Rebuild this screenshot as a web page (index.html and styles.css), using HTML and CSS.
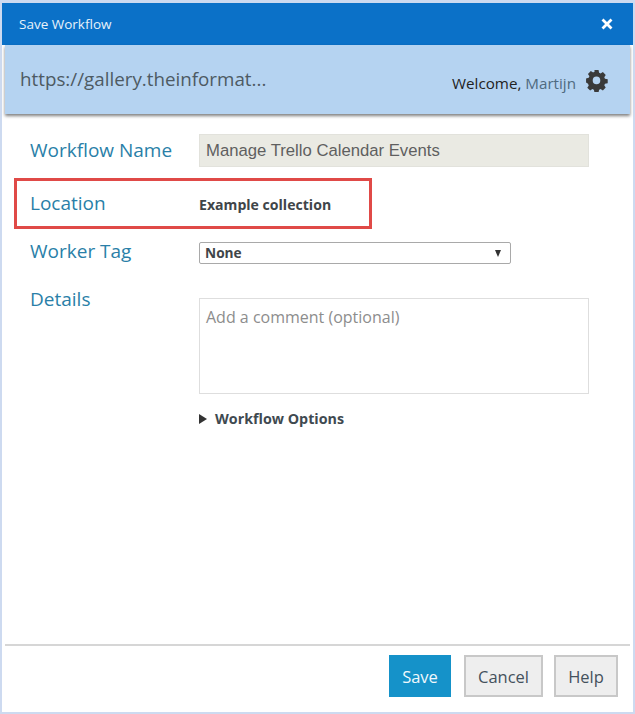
FILE: index.html
```html
<!DOCTYPE html>
<html lang="en">
<head>
<meta charset="utf-8">
<title>Save Workflow</title>
<link rel="stylesheet" href="styles.css">
</head>
<body>
<div class="window">
  <header class="titlebar">
    <span class="title">Save Workflow</span>
    <button class="close" type="button" aria-label="Close">
      <svg viewBox="0 0 12 12" width="12" height="12"><path d="M1.5 1.5l9 9M10.5 1.5l-9 9" stroke="#fff" stroke-width="2.8" fill="none"/></svg>
    </button>
  </header>
  <section class="server">
    <span class="url">https://gallery.theinformat...</span>
    <div class="user">
      <span class="welcome">Welcome, <span class="name">Martijn</span></span>
      <svg class="gear" viewBox="0 0 24 24" width="23" height="23"><path fill="#3a3a3a" fill-rule="evenodd" d="M9.6 1h4.8l.6 3.1c.6.2 1.2.5 1.7.8l2.7-1.7 3.3 3.4-1.7 2.6c.3.6.6 1.2.8 1.8l3.2.6v4.7l-3.2.6c-.2.6-.4 1.2-.8 1.8l1.7 2.6-3.3 3.4-2.7-1.8c-.5.4-1.1.6-1.7.8l-.6 3.2H9.6L9 23.8c-.6-.2-1.2-.4-1.7-.8l-2.7 1.8-3.3-3.4 1.7-2.6c-.4-.6-.6-1.2-.8-1.8L-.1 15.4v-4.7L3 10c.2-.6.5-1.2.8-1.8L2.1 5.6l3.3-3.4 2.7 1.7c.5-.3 1.1-.6 1.7-.8zM12 8.6a4.4 4.4 0 1 0 0 8.8 4.4 4.4 0 0 0 0-8.8z" transform="translate(1.2 .2) scale(.9)"/></svg>
    </div>
  </section>
  <main class="form">
    <div class="row row-name">
      <label class="label">Workflow Name</label>
      <div class="readonly">Manage Trello Calendar Events</div>
    </div>
    <div class="row row-location">
      <label class="label">Location</label>
      <strong class="location">Example collection</strong>
    </div>
    <div class="row row-tag">
      <label class="label">Worker Tag</label>
      <div class="select"><span>None</span><span class="caret"></span></div>
    </div>
    <div class="row row-details">
      <label class="label">Details</label>
      <div class="details-col">
        <div class="comment">Add a comment (optional)</div>
        <div class="options"><span class="arrow"></span>Workflow Options</div>
      </div>
    </div>
  </main>
  <footer class="footer">
    <button class="btn primary" type="button">Save</button>
    <button class="btn cancel" type="button">Cancel</button>
    <button class="btn help" type="button">Help</button>
  </footer>
</div>
</body>
</html>
```
FILE: styles.css
```css
* { box-sizing: border-box; }
html, body { margin: 0; height: 100%; }
body {
  background: #fff;
  font-family: "Open Sans", "Noto Sans", sans-serif;
  overflow: hidden;
}
.window {
  width: 635px;
  height: 714px;
  display: flex;
  flex-direction: column;
  border: 2px solid #cddaf0;
  border-top-width: 3px;
  background: #fff;
}
.titlebar {
  height: 42px;
  flex: none;
  background: #0b71c8;
  display: flex;
  align-items: center;
  justify-content: space-between;
  padding: 0 20px 0 17px;
  color: #fff;
}
.title { font-size: 13.5px; color: #e8f1fa; }
.close {
  border: 0;
  background: none;
  padding: 0;
  display: flex;
}
.server {
  height: 69px;
  flex: none;
  margin: 0 3px;
  padding: 0 22px 0 15px;
  background: #b5d3f1;
  box-shadow: 0 2px 3px rgba(0, 0, 0, .5);
  display: flex;
  align-items: center;
  justify-content: space-between;
}
.url { font-size: 18.8px; color: #4d5a63; margin-bottom: 2px; }
.user { display: flex; align-items: center; gap: 9px; margin-top: 4px; }
.welcome { font-size: 15.2px; color: #222; margin-top: 2px; }
.name { color: #4f6a80; }
.gear { display: block; margin-bottom: 3px; }
.form {
  flex: 1;
  padding: 20px 0 0 28px;
}
.row { display: flex; }
.label {
  width: 169px;
  flex: none;
  font-size: 19px;
  color: #2a7fa8;
  line-height: 26px;
}
.row-name { align-items: center; height: 33px; }
.row-name .label { margin-bottom: 2px; }
.readonly {
  width: 390px;
  height: 33px;
  background: #eaeae3;
  border: 1px solid #e2e2dc;
  padding: 0 6px;
  font: 16.7px/31px "Liberation Sans", Arial, sans-serif;
  color: #5f5f5f;
}
.row-location {
  width: 358px;
  height: 51px;
  margin: 11px 0 0 -16px;
  padding: 2px 0 0 13px;
  border: 3px solid #e04a47;
  align-items: center;
}
.row-location .label { margin-top: -3px; }
.location { font-size: 14.1px; color: #3f4549; }
.row-tag { margin-top: 13px; height: 22px; align-items: center; }
.select {
  width: 312px;
  height: 22px;
  border: 1px solid #a9a9a9;
  border-radius: 2px;
  display: flex;
  align-items: center;
  justify-content: space-between;
  padding: 0 9px 2px 5px;
  font-size: 13.7px;
  font-weight: 700;
  color: #3f4549;
}
.row-tag .label { margin-top: -4px; }
.caret {
  width: 0;
  height: 0;
  margin-top: 2px;
  border-left: 3.5px solid transparent;
  border-right: 3.5px solid transparent;
  border-top: 7px solid #333;
}
.row-details { margin-top: 22px; }
.details-col { padding-top: 12px; }
.comment {
  width: 390px;
  height: 96px;
  border: 1px solid #dedede;
  padding: 7px 6px;
  font-size: 16px;
  line-height: 22px;
  color: #8d8d8d;
}
.options {
  display: flex;
  align-items: center;
  margin-top: 15px;
  font-size: 14.3px;
  font-weight: 700;
  line-height: 20px;
  color: #3f4a51;
}
.arrow {
  flex: none;
  width: 8px;
  height: 10px;
  margin-right: 8px;
  background: #333;
  clip-path: polygon(0 0, 100% 50%, 0 100%);
}
.footer {
  flex: none;
  height: 68px;
  margin: 0 0 0 3px;
  padding: 11px 0 0 384px;
  display: flex;
  align-items: flex-start;
  position: relative;
}
.footer::before {
  content: "";
  position: absolute;
  left: 0;
  top: 0;
  width: 625px;
  height: 2px;
  background: #d6d6d6;
}
.btn {
  height: 42px;
  font-family: inherit;
  font-size: 16.5px;
  padding: 0;
  border: 2px solid #c8c8c8;
  background: #eeeeee;
  color: #44515c;
}
.primary { width: 62px; background: #1592c9; border: 0; color: #f0f8fc; }
.cancel { width: 79px; margin-left: 13px; }
.help { width: 64px; margin-left: 11px; }
```
